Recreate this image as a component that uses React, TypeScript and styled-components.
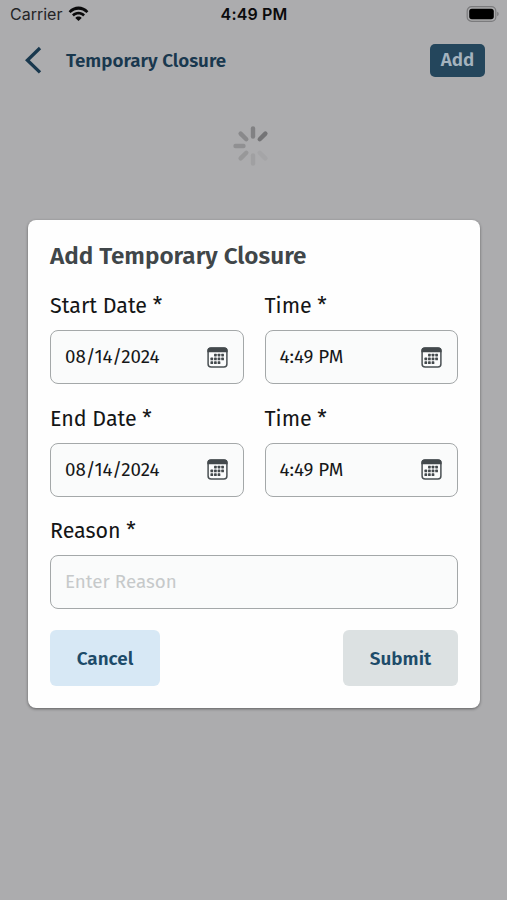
import React from "react";
import styled, { createGlobalStyle } from "styled-components";

const Global = createGlobalStyle`
  *, *::before, *::after { box-sizing: border-box; }
  body { margin: 0; background: #acacae; font-family: "Fira Sans", "Noto Sans", sans-serif; }
  button, input { font-family: inherit; }
`;

const Screen = styled.div`
  width: 507px;
  height: 900px;
  overflow: hidden;
  background: #acacae;
  display: flex;
  flex-direction: column;
`;

const StatusBar = styled.header`
  height: 30px;
  flex: none;
  padding: 0 8px 2px 10px;
  display: grid;
  grid-template-columns: 1fr auto 1fr;
  align-items: center;
  font-family: Inter, sans-serif;
  font-size: 16px;
  line-height: 28px;
  color: #0b0b0c;
`;

const Carrier = styled.div`
  display: flex;
  align-items: center;
  gap: 6px;
  color: #242426;
  letter-spacing: 0;
`;

const Clock = styled.div`
  font-weight: 600;
  letter-spacing: 0.15px;
  margin-right: 1px;
`;

const BatterySlot = styled.div`
  display: flex;
  justify-content: flex-end;
`;

const NavBar = styled.nav`
  height: 60px;
  flex: none;
  padding: 0 22px 0 24px;
  display: flex;
  align-items: center;
`;

const BackButton = styled.button`
  border: 0;
  padding: 0;
  background: none;
  display: flex;
  width: 42px;
`;

const NavTitle = styled.h1`
  margin: 0;
  padding-top: 2px;
  flex: 1;
  font-size: 18.8px;
  font-weight: 600;
  line-height: 30px;
  color: #19384e;
`;

const AddButton = styled.button`
  width: 55px;
  height: 33px;
  padding: 0 0 1px;
  border: 0;
  border-radius: 5px;
  background: #24465c;
  color: #a4b3be;
  font-size: 18.8px;
  font-weight: 600;
  line-height: 31px;
`;

const SpinnerSlot = styled.div`
  height: 130px;
  flex: none;
  display: flex;
  justify-content: center;
  align-items: flex-start;
  padding: 35px 1px 0 0;
`;

const Dialog = styled.section`
  width: 452px;
  height: 488px;
  flex: none;
  margin-left: 28px;
  padding: 18px 22px 22px;
  border-radius: 8px;
  background: #fefefe;
  box-shadow: 0 1px 3px rgba(0, 0, 0, 0.45);
  display: flex;
  flex-direction: column;
`;

const DialogTitle = styled.h2`
  margin: 0 0 15px;
  font-size: 24.3px;
  font-weight: 600;
  line-height: 36px;
  color: #404649;
  white-space: nowrap;
`;

const Fields = styled.div`
  display: grid;
  grid-template-columns: 1fr 1fr;
  column-gap: 21px;
  row-gap: 17.5px;
`;

const Field = styled.div<{ $wide?: boolean }>`
  display: flex;
  flex-direction: column;
  gap: 7px;
  grid-column: ${(p) => (p.$wide ? "1 / -1" : "auto")};
`;

const LabelText = styled.label`
  font-size: 21.45px;
  line-height: 34px;
  height: 34px;
  color: #141516;
`;

const Control = styled.div`
  height: 54px;
  padding: 0 15px 0 14px;
  border: 1px solid #a4a8a9;
  border-radius: 8px;
  background: #fafbfb;
  display: flex;
  align-items: center;
  justify-content: space-between;
`;

const Value = styled.span`
  font-size: 18.8px;
  line-height: 28px;
  color: #161718;
`;

const ReasonInput = styled.input`
  width: 100%;
  border: 0;
  padding: 0;
  outline: 0;
  background: none;
  font-size: 18.8px;
  line-height: 28px;
  color: #161718;
  &::placeholder { color: #c6c9ca; opacity: 1; }
`;

const Actions = styled.footer`
  margin-top: auto;
  display: flex;
  justify-content: space-between;
`;

const ActionButton = styled.button<{ $kind: "cancel" | "submit" }>`
  width: ${(p) => (p.$kind === "cancel" ? 110 : 115)}px;
  height: 56px;
  padding: 1px 0 0;
  border: 0;
  border-radius: 6px;
  background: ${(p) => (p.$kind === "cancel" ? "#d7e8f5" : "#dce1e2")};
  color: #1d4b69;
  font-size: 18.9px;
  font-weight: 600;
`;

const WifiIcon = () => (
  <svg width="21" height="16" viewBox="0 0 21 16" fill="#0a0a0b">
    <path d="M.6 5.2C6-1 15-1 20.400 5.200L18.500 7.100C14 2.500 7 2.500 2.500 7.100Z" />
    <path d="M4 8.600C7.600 4.800 13.400 4.800 17 8.600L15.100 10.500C12.500 7.900 8.500 7.900 5.900 10.500Z" />
    <path d="M7.300 11.900C9 10.100 12 10.100 13.700 11.900L10.500 15.100Z" />
  </svg>
);

const BatteryIcon = () => (
  <svg width="33" height="16" viewBox="0 0 33 16">
    <rect x="1.200" y=".7" width="28.600" height="14.600" rx="4.400" fill="none" stroke="#7b7b7d" strokeWidth="1.200" />
    <rect x="3.200" y="2.700" width="24.600" height="10.600" rx="2.700" fill="#000" />
    <path d="M31.200 5.800Q32.700 6.400 32.700 8T31.200 10.200Z" fill="#7b7b7d" />
  </svg>
);

const BackIcon = () => (
  <svg width="18" height="28" viewBox="0 0 18 28" fill="none" stroke="#19384e" strokeWidth="3.300" strokeLinecap="butt">
    <path d="M16 2L3.400 14.200L16 26.400" />
  </svg>
);

const spokes = [
  { angle: 0, tone: "#818183" },
  { angle: 45, tone: "#747476" },
  { angle: 135, tone: "#a5a5a7" },
  { angle: 180, tone: "#a0a0a2" },
  { angle: 225, tone: "#989899" },
  { angle: 270, tone: "#909092" },
  { angle: 315, tone: "#89898b" },
];

const Spinner = () => (
  <svg width="42" height="42" viewBox="-21 -21 42 42" strokeWidth="4.400" strokeLinecap="round">
    {spokes.map((s) => (
      <line key={s.angle} x1="0" y1="-17.500" x2="0" y2="-9.500" stroke={s.tone} transform={`rotate(${s.angle})`} />
    ))}
  </svg>
);

const days = [
  [8.400, 8.100], [12, 8.100], [15.600, 8.100],
  [4.800, 11.900], [8.400, 11.900], [12, 11.900], [15.600, 11.900],
  [4.800, 15.700], [8.400, 15.700], [12, 15.700],
];

const CalendarIcon = () => (
  <svg width="21" height="21" viewBox="0 0 21 21">
    <rect x="1.100" y="1.100" width="18.800" height="18.800" rx="3" fill="#fbfcfc" stroke="#4a5053" strokeWidth="1.500" />
    <path d="M.4 5.300V3.600Q.4.400 3.600.4H17.400Q20.600.4 20.600 3.600V5.300Z" fill="#43494c" />
    {days.map(([x, y]) => (
      <rect key={`${x}-${y}`} x={x - 1.350} y={y - 1.350} width="2.700" height="2.700" rx=".6" fill="#43494c" />
    ))}
  </svg>
);

const Picker = ({ label, value }: { label: string; value: string }) => (
  <Field>
    <LabelText>{label}</LabelText>
    <Control>
      <Value>{value}</Value>
      <CalendarIcon />
    </Control>
  </Field>
);

export default function App() {
  return (
    <>
      <Global />
      <Screen>
        <StatusBar>
          <Carrier>Carrier <WifiIcon /></Carrier>
          <Clock>4:49 PM</Clock>
          <BatterySlot><BatteryIcon /></BatterySlot>
        </StatusBar>
        <NavBar>
          <BackButton aria-label="Back"><BackIcon /></BackButton>
          <NavTitle>Temporary Closure</NavTitle>
          <AddButton>Add</AddButton>
        </NavBar>
        <SpinnerSlot><Spinner /></SpinnerSlot>
        <Dialog role="dialog">
          <DialogTitle>Add Temporary Closure</DialogTitle>
          <Fields>
            <Picker label="Start Date *" value="08/14/2024" />
            <Picker label="Time *" value="4:49 PM" />
            <Picker label="End Date *" value="08/14/2024" />
            <Picker label="Time *" value="4:49 PM" />
            <Field $wide>
              <LabelText htmlFor="reason">Reason *</LabelText>
              <Control><ReasonInput id="reason" placeholder="Enter Reason" /></Control>
            </Field>
          </Fields>
          <Actions>
            <ActionButton $kind="cancel">Cancel</ActionButton>
            <ActionButton $kind="submit">Submit</ActionButton>
          </Actions>
        </Dialog>
      </Screen>
    </>
  );
}
